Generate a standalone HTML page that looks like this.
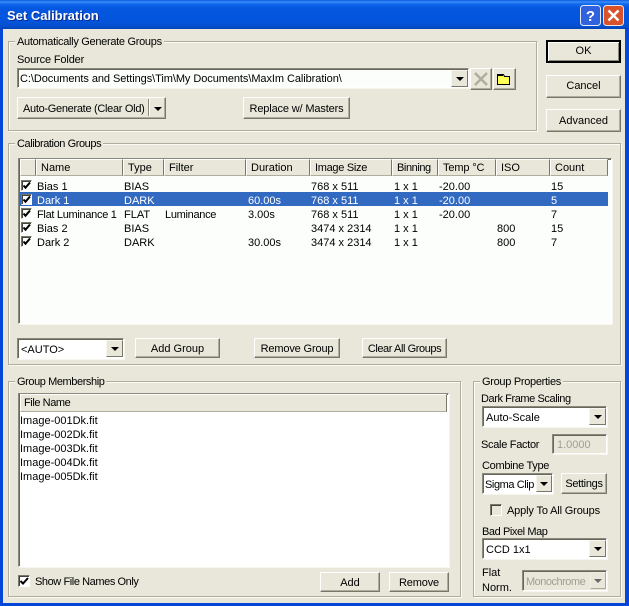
<!DOCTYPE html>
<html><head><meta charset="utf-8"><style>
html,body{margin:0;padding:0;width:629px;height:606px;overflow:hidden;background:#0a3ed0}
*{box-sizing:border-box}
#w{position:absolute;left:0;top:0;width:629px;height:606px;overflow:hidden;font:11px/14px "Liberation Sans",sans-serif;color:#000;background:#0545d8}
#tb{position:absolute;left:0;top:0;width:629px;height:29px;background:linear-gradient(#0a5ae0 0,#3b8cf8 2px,#1068ea 4px,#0457e0 8px,#0455dd 20px,#0550d0 26px,#0344b8 29px)}
#bg{position:absolute;left:3px;top:29px;width:622px;height:574px;background:#e8e7da}
.t{position:absolute;white-space:nowrap;line-height:16px;margin-top:1px}
.g{position:absolute;border:1px solid #aeae9d;box-shadow:inset 1px 1px 0 #fbfbf5,1px 1px 0 #fbfbf5}
.l{position:absolute;background:#e8e7da;padding:0 2px;white-space:nowrap;line-height:16px;height:14px}
.b{position:absolute;background:#e8e7da;border:1px solid;border-color:#fff #77776a #77776a #fff;box-shadow:inset -1px -1px 0 #aeae9d;text-align:center;white-space:nowrap;padding-top:1px}
.s{position:absolute;background:#fbfefa;border:1px solid;border-color:#8a8a7c #fff #fff #8a8a7c;box-shadow:inset 1px 1px 0 #66665a,1px 1px 0 #f6f6ee}
.a{position:absolute;background:#e8e7da;border:1px solid;border-color:#f6f6ee #77776a #77776a #f6f6ee}
.a:after{content:"";position:absolute;left:50%;top:50%;margin:-2px 0 0 -4px;border:4px solid transparent;border-top:4px solid #000;border-bottom:0}
.h{position:absolute;top:159px;height:17px;background:#e8e7da;border:1px solid;border-color:#fff #77776a #aeae9d #fff;line-height:16px;padding-left:4px;white-space:nowrap}
.c{position:absolute;width:11px;height:11px;background:#fbfefa;border:1px solid;border-color:#77776a #fff #fff #77776a;box-shadow:inset 1px 1px 0 #44443c}
.c svg{position:absolute;left:0;top:0}
.n1{letter-spacing:-.15px}.n2{letter-spacing:-.3px}.n3{letter-spacing:-.42px}
</style></head><body><div id="w">
<div id="tb"></div><div id="bg"></div>
<div class="t" style="left:7px;top:7px;font:bold 13px/16px 'Liberation Sans',sans-serif;color:#fff;text-shadow:1px 1px 0 #0a2c90">Set Calibration</div>
<svg style="position:absolute;left:580px;top:5px" width="44" height="21" viewBox="0 0 44 21">
<rect x=".5" y=".5" width="20" height="20" rx="3" fill="#2f62dc" stroke="#e8ecfa"/>
<text x="10.500" y="16" text-anchor="middle" font-family="Liberation Sans" font-weight="bold" font-size="15" fill="#fff">?</text>
<rect x="23.500" y=".5" width="20" height="20" rx="3" fill="#d8532c" stroke="#f2e6e0"/>
<path d="M28.500 5.500l10 10M38.500 5.500l-10 10" stroke="#fff" stroke-width="2.400" fill="none"/>
</svg>

<div class="g" style="left:8px;top:41px;width:529px;height:90px"></div>
<div class="l n2" style="left:15px;top:34px">Automatically Generate Groups</div>
<div class="t n1" style="left:17px;top:51px">Source Folder</div>
<div class="s" style="left:17px;top:68px;width:452px;height:20px"></div>
<div class="t" style="left:20px;top:70px;letter-spacing:-.07px">C:\Documents and Settings\Tim\My Documents\MaxIm Calibration\</div>
<div class="a" style="left:451px;top:70px;width:17px;height:17px"></div>
<div class="b" style="left:470px;top:68px;width:22px;height:22px"></div>
<svg style="position:absolute;left:473px;top:71px" width="16" height="16"><path d="M2 2l12 12M14 2L2 14" stroke="#aeae9d" stroke-width="2.500"/></svg>
<div class="b" style="left:493px;top:68px;width:23px;height:22px"></div>
<svg style="position:absolute;left:496px;top:72px" width="18" height="14"><path d="M1.500 4.500v-2h6l1 2h5v8h-12z" fill="#ffff55" stroke="#000"/><path d="M2 3.500h5" stroke="#000"/></svg>
<div class="b n2" style="left:17px;top:97px;width:149px;height:22px;line-height:20px;text-align:left;padding-left:5px">Auto-Generate (Clear Old)</div>
<div style="position:absolute;left:148px;top:99px;width:2px;height:17px;border-left:1px solid #8a8a7c;border-right:1px solid #fff"></div>
<div style="position:absolute;left:154px;top:107px;border:4px solid transparent;border-top:4px solid #000;border-bottom:0"></div>
<div class="b n1" style="left:243px;top:97px;width:107px;height:22px;line-height:20px">Replace w/ Masters</div>

<div class="b" style="left:546px;top:40px;width:75px;height:23px;line-height:19px;padding-top:0;border:2px solid #000;box-shadow:inset 1px 1px 0 #fff,inset -1px -1px 0 #8a8a7c">OK</div>
<div class="b" style="left:546px;top:75px;width:75px;height:23px;line-height:19px">Cancel</div>
<div class="b" style="left:546px;top:109px;width:75px;height:23px;line-height:20px">Advanced</div>

<div class="g" style="left:8px;top:143px;width:613px;height:222px"></div>
<div class="l n3" style="left:15px;top:136px">Calibration Groups</div>
<div class="s" style="left:18px;top:158px;width:594px;height:166px"></div>
<div class="h" style="left:20px;width:16px"></div>
<div class="h" style="left:36px;width:87px;padding-left:4px">Name</div>
<div class="h" style="left:123px;width:41px">Type</div>
<div class="h" style="left:164px;width:82px">Filter</div>
<div class="h" style="left:246px;width:64px">Duration</div>
<div class="h n2" style="left:310px;width:82px">Image Size</div>
<div class="h n3" style="left:392px;width:46px">Binning</div>
<div class="h n1" style="left:438px;width:58px">Temp °C</div>
<div class="h" style="left:496px;width:54px">ISO</div>
<div class="h" style="left:550px;width:58px">Count</div>
<div style="position:absolute;left:20px;top:192px;width:588px;height:14px;background:#316ac0"></div>

<div class="c" style="left:21px;top:180px"><svg width="9" height="9"><path d="M1.500 4.500l2 2.200L8 1.500" stroke="#000" stroke-width="2" fill="none"/></svg></div>
<div class="c" style="left:21px;top:194px"><svg width="9" height="9"><path d="M1.500 4.500l2 2.200L8 1.500" stroke="#000" stroke-width="2" fill="none"/></svg></div>
<div class="c" style="left:21px;top:208px"><svg width="9" height="9"><path d="M1.500 4.500l2 2.200L8 1.500" stroke="#000" stroke-width="2" fill="none"/></svg></div>
<div class="c" style="left:21px;top:222px"><svg width="9" height="9"><path d="M1.500 4.500l2 2.200L8 1.500" stroke="#000" stroke-width="2" fill="none"/></svg></div>
<div class="c" style="left:21px;top:236px"><svg width="9" height="9"><path d="M1.500 4.500l2 2.200L8 1.500" stroke="#000" stroke-width="2" fill="none"/></svg></div>

<div class="t" style="left:37px;top:178px">Bias 1</div><div class="t" style="left:124px;top:178px">BIAS</div><div class="t" style="left:311px;top:178px">768 x 511</div><div class="t" style="left:394px;top:178px">1 x 1</div><div class="t" style="left:439px;top:178px">-20.00</div><div class="t" style="left:551px;top:178px">15</div>
<div style="color:#fff"><div class="t" style="left:37px;top:192px">Dark 1</div><div class="t" style="left:124px;top:192px">DARK</div><div class="t" style="left:248px;top:192px">60.00s</div><div class="t" style="left:311px;top:192px">768 x 511</div><div class="t" style="left:394px;top:192px">1 x 1</div><div class="t" style="left:439px;top:192px">-20.00</div><div class="t" style="left:551px;top:192px">5</div></div>
<div class="t n2" style="left:37px;top:206px">Flat Luminance 1</div><div class="t" style="left:124px;top:206px">FLAT</div><div class="t n2" style="left:165px;top:206px">Luminance</div><div class="t" style="left:248px;top:206px">3.00s</div><div class="t" style="left:311px;top:206px">768 x 511</div><div class="t" style="left:394px;top:206px">1 x 1</div><div class="t" style="left:439px;top:206px">-20.00</div><div class="t" style="left:551px;top:206px">7</div>
<div class="t" style="left:37px;top:220px">Bias 2</div><div class="t" style="left:124px;top:220px">BIAS</div><div class="t" style="left:311px;top:220px">3474 x 2314</div><div class="t" style="left:394px;top:220px">1 x 1</div><div class="t" style="left:497px;top:220px">800</div><div class="t" style="left:551px;top:220px">15</div>
<div class="t" style="left:37px;top:234px">Dark 2</div><div class="t" style="left:124px;top:234px">DARK</div><div class="t" style="left:248px;top:234px">30.00s</div><div class="t" style="left:311px;top:234px">3474 x 2314</div><div class="t" style="left:394px;top:234px">1 x 1</div><div class="t" style="left:497px;top:234px">800</div><div class="t" style="left:551px;top:234px">7</div>

<div class="s" style="left:17px;top:338px;width:107px;height:21px;background:#fff"></div>
<div class="t" style="left:21px;top:341px">&lt;AUTO&gt;</div>
<div class="a" style="left:106px;top:340px;width:17px;height:17px"></div>
<div class="b" style="left:135px;top:338px;width:85px;height:20px;line-height:18px">Add Group</div>
<div class="b n1" style="left:254px;top:338px;width:86px;height:20px;line-height:18px">Remove Group</div>
<div class="b n3" style="left:362px;top:338px;width:85px;height:20px;line-height:18px">Clear All Groups</div>

<div class="g" style="left:8px;top:381px;width:453px;height:216px"></div>
<div class="l n3" style="left:15px;top:374px">Group Membership</div>
<div class="s" style="left:18px;top:393px;width:431px;height:174px;background:#fff"></div>
<div class="h n3" style="left:20px;top:394px;width:427px;height:18px;padding-left:3px">File Name</div>
<div class="t" style="left:20px;top:412px">Image-001Dk.fit</div>
<div class="t" style="left:20px;top:426px">Image-002Dk.fit</div>
<div class="t" style="left:20px;top:440px">Image-003Dk.fit</div>
<div class="t" style="left:20px;top:454px">Image-004Dk.fit</div>
<div class="t" style="left:20px;top:468px">Image-005Dk.fit</div>
<div class="c" style="left:18px;top:575px;width:12px;height:12px;background:#fff"><svg width="10" height="10"><path d="M1.500 5l2.500 2.500L9 2" stroke="#000" stroke-width="2" fill="none"/></svg></div>
<div class="t n3" style="left:35px;top:573px">Show File Names Only</div>
<div class="b" style="left:320px;top:572px;width:60px;height:20px;line-height:18px">Add</div>
<div class="b n1" style="left:389px;top:572px;width:60px;height:20px;line-height:18px">Remove</div>

<div class="g" style="left:473px;top:381px;width:148px;height:216px"></div>
<div class="l n2" style="left:480px;top:374px">Group Properties</div>
<div class="t n3" style="left:481px;top:390px">Dark Frame Scaling</div>
<div class="s" style="left:482px;top:406px;width:125px;height:21px;background:#fff"></div>
<div class="t" style="left:486px;top:409px">Auto-Scale</div>
<div class="a" style="left:589px;top:408px;width:17px;height:17px"></div>
<div class="t n2" style="left:481px;top:436px">Scale Factor</div>
<div class="s" style="left:552px;top:434px;width:55px;height:20px;background:#e8e7da"></div>
<div class="t" style="left:557px;top:436px;color:#a0a092">1.0000</div>
<div class="t n2" style="left:482px;top:457px">Combine Type</div>
<div class="s" style="left:482px;top:473px;width:71px;height:21px;background:#fff"></div>
<div class="t n3" style="left:485px;top:476px">Sigma Clip</div>
<div class="a" style="left:536px;top:475px;width:16px;height:17px"></div>
<div class="b n2" style="left:561px;top:473px;width:46px;height:21px;line-height:18px">Settings</div>
<div class="c" style="left:490px;top:504px;width:12px;height:12px;background:#e8e7da"></div>
<div class="t n1" style="left:507px;top:502px">Apply To All Groups</div>
<div class="t n3" style="left:482px;top:523px">Bad Pixel Map</div>
<div class="s" style="left:482px;top:538px;width:125px;height:21px;background:#fff"></div>
<div class="t" style="left:486px;top:541px">CCD 1x1</div>
<div class="a" style="left:589px;top:540px;width:17px;height:17px"></div>
<div class="t" style="left:482px;top:564px">Flat</div>
<div class="t" style="left:482px;top:579px">Norm.</div>
<div class="s" style="left:522px;top:570px;width:85px;height:21px;background:#e8e7da"></div>
<div class="t" style="left:526px;top:573px;color:#a0a092;letter-spacing:-.5px">Monochrome</div>
<div class="a" style="left:590px;top:572px;width:16px;height:17px;opacity:.55"></div>
</div></body></html>
